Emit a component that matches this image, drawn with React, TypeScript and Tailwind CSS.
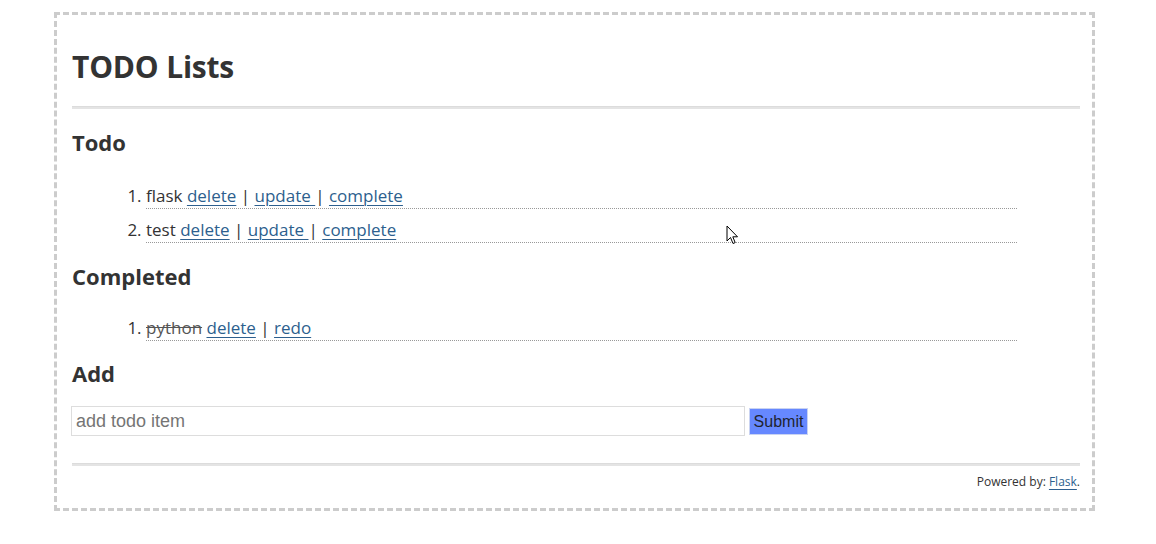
import React from "react";

type Item = { id: number; title: string };

const todos: Item[] = [
  { id: 1, title: "flask" },
  { id: 2, title: "test" },
];

const done: Item[] = [{ id: 3, title: "python" }];

const link = "text-[#2d5f8e] underline decoration-1 underline-offset-[3px]";

function Cursor() {
  return (
    <svg
      className="absolute left-[726px] top-[225px]"
      width="14"
      height="21"
      viewBox="0 0 14 21"
    >
      <path
        d="M1 1 L1 16 L4.5 12.5 L7 18.5 L9.2 17.6 L6.8 11.8 L11.5 11.8 Z"
        fill="#fff"
        stroke="#000"
        strokeWidth="1"
        strokeLinejoin="round"
      />
    </svg>
  );
}

export default function App() {
  return (
    <div className="relative w-[1156px] h-[544px] pt-[12px] bg-white font-['Open_Sans',sans-serif] text-[#333]">
      <div className="absolute left-0 top-0 w-full h-full pointer-events-none">
        <Cursor />
      </div>
      <div className="ml-[54px] w-[1041px] border-[3px] border-dashed border-[#cccccc] pl-[15px] pr-[12px] pt-[32px] pb-[18px]">
        <h1 className="text-[30px] leading-[40px] font-bold tracking-[-0.2px]">
          TODO Lists
        </h1>
        <div className="mt-[19px] h-[3px] bg-[#e4e4e4] border-t border-[#dcdcdc]" />

        <h2 className="mt-[17px] text-[22px] leading-[32px] font-bold">Todo</h2>
        <ol className="mt-[17px] list-decimal pl-[74px] pr-[63px] text-[17px]">
          {todos.map((t) => (
            <li
              key={t.id}
              className="pt-[9px] leading-[24px] border-b border-dotted border-[#999]"
            >
              {t.title} <a className={link}>delete</a> |{" "}
              <a className={link}>update </a>| <a className={link}>complete</a>
            </li>
          ))}
        </ol>

        <h2 className="mt-[17px] text-[22px] leading-[32px] font-bold">
          Completed
        </h2>
        <ol className="mt-[15px] list-decimal pl-[74px] pr-[63px] text-[17px]">
          {done.map((t) => (
            <li
              key={t.id}
              className="pt-[9px] leading-[24px] border-b border-dotted border-[#999]"
            >
              <span className="line-through text-[#555]">{t.title}</span>{" "}
              <a className={link}>delete</a> | <a className={link}>redo</a>
            </li>
          ))}
        </ol>

        <h2 className="mt-[16px] text-[22px] leading-[32px] font-bold">Add</h2>
        <form className="mt-[17px] ml-[-1px] flex items-center gap-[4px]">
          <input
            className="w-[674px] h-[30px] border border-[#dddddd] px-[4px] text-[18px] font-['Liberation_Sans',Arial,sans-serif] text-[#333] placeholder:text-[#757575] outline-none"
            placeholder="add todo item"
          />
          <button
            type="button"
            className="w-[59px] h-[27px] bg-[#6688ff] border border-[#c9d3f2] text-[16px] leading-[25px] font-['Liberation_Sans',Arial,sans-serif] text-[#1f2430]"
          >
            Submit
          </button>
        </form>

        <div className="mt-[27px] h-[3px] bg-[#e4e4e4] border-t border-[#dcdcdc]" />
        <p className="mt-[8px] text-right text-[12px] leading-[16px] text-[#333]">
          Powered by: <a className={link + " underline-offset-[2px]"}>Flask</a>.
        </p>
      </div>
    </div>
  );
}
